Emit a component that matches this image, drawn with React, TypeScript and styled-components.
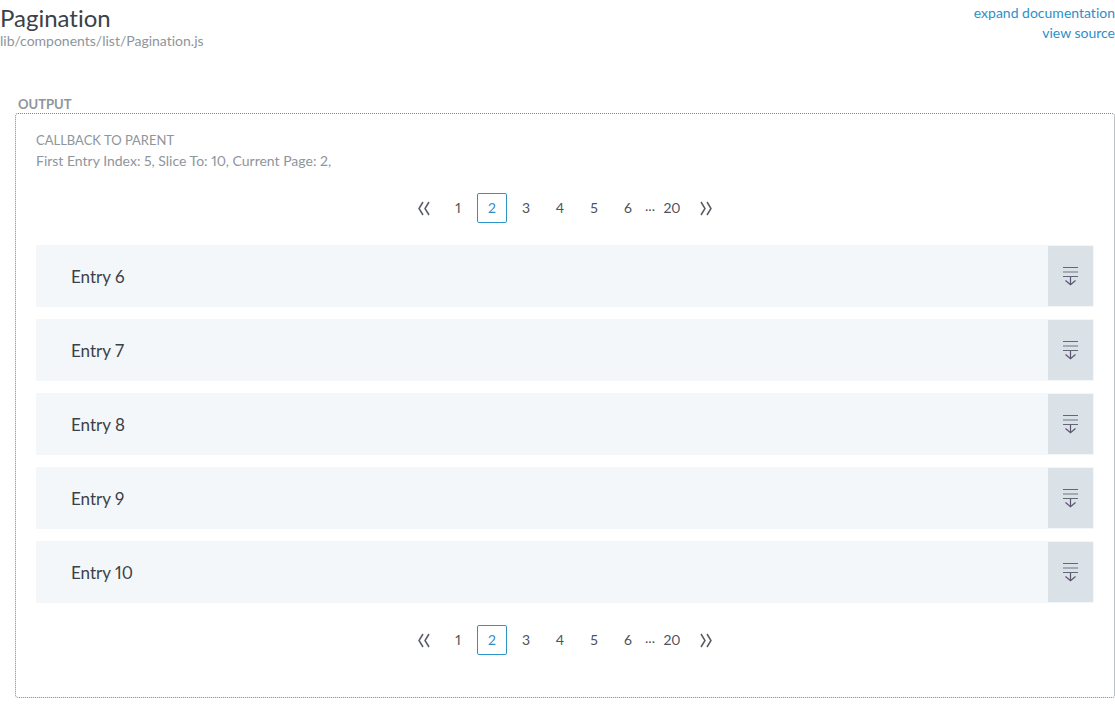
import React, { useState } from "react";
import styled, { createGlobalStyle } from "styled-components";

const GlobalStyle = createGlobalStyle`
  *, *::before, *::after { box-sizing: border-box; }
  body {
    margin: 0;
    background: #fff;
    color: #434a54;
    font-family: Lato, "Liberation Sans", sans-serif;
    font-size: 14px;
    line-height: 20px;
    font-variant-ligatures: none;
    font-variant-numeric: proportional-nums;
  }
  h1, h2, p, ul { margin: 0; padding: 0; }
  ul { list-style: none; }
`;

const Header = styled.header`
  display: flex;
  justify-content: space-between;
  align-items: flex-start;
`;

const Title = styled.h1`
  padding-top: 4px;
  font-size: 24px;
  line-height: 27px;
  font-weight: 400;
  color: #3b4148;
`;

const FilePath = styled.p`
  line-height: 20px;
  color: #8e959c;
`;

const Links = styled.nav`
  display: flex;
  flex-direction: column;
  align-items: flex-end;
  padding-top: 3px;
`;

const DocLink = styled.a`
  color: #2d8fc9;
  text-decoration: none;
  &:hover { text-decoration: underline; }
`;

const Output = styled.section`
  padding: 45px 0 30px 15px;
`;

const OutputLabel = styled.h2`
  padding-left: 3px;
  font-size: 13px;
  line-height: 17px;
  font-weight: 700;
  color: #8e959c;
`;

const Frame = styled.div`
  padding: 15px 20px 42px;
  border: 1px dotted #7d858d;
  border-radius: 3px;
`;

const Callback = styled.div`
  padding-bottom: 22px;
  color: #8e959c;
`;

const CallbackTitle = styled.p`
  font-size: 13px;
  line-height: 22px;
`;

const Pager = styled.nav`
  display: flex;
  justify-content: center;
  align-items: center;
  gap: 4px;
`;

const PageButton = styled.button<{ $current?: boolean }>`
  display: flex;
  align-items: center;
  justify-content: center;
  width: 30px;
  height: 30px;
  padding: 0;
  border: 1px solid ${(p) => (p.$current ? "#2d93cb" : "transparent")};
  border-radius: 2px;
  background: none;
  color: ${(p) => (p.$current ? "#2d8fc9" : "#4d535a")};
  font: inherit;
  cursor: pointer;
`;

const Ellipsis = styled.span`
  width: 14px;
  margin: 0 -4px;
  padding-bottom: 4px;
  font-size: 14px;
  line-height: 16px;
  text-align: center;
  white-space: nowrap;
  color: #4d535a;
`;

const Entries = styled.ul`
  display: grid;
  gap: 12px;
  margin: 22px 0;
`;

const Entry = styled.li`
  display: flex;
  justify-content: space-between;
  height: 62px;
  border: 1px solid #f3f7fa;
  border-radius: 1px;
  background: #f3f7fa;
`;

const EntryName = styled.span`
  align-self: center;
  padding: 2px 0 0 34px;
  font-size: 17px;
  line-height: 24px;
  color: #3b4148;
`;

const ExpandButton = styled.button`
  display: flex;
  align-items: center;
  justify-content: center;
  width: 45px;
  padding: 0;
  border: 0;
  background: #dae1e7;
  cursor: pointer;
`;

const Chevrons = ({ back }: { back?: boolean }) => (
  <svg width="14" height="16" viewBox="0 0 14 16" fill="none" stroke="#555b62" strokeWidth="1.5" aria-hidden="true">
    {back ? <path d="M6 2 2 8.500l4 6.500M12 2 8 8.500l4 6.500" /> : <path d="m2 2 4 6.500-4 6.500M8 2 12 8.500l-4 6.500" />}
  </svg>
);

const ExpandIcon = () => (
  <svg width="15" height="20" viewBox="0 0 15 20" fill="none" aria-hidden="true">
    <path d="M0 1.500h15M0 10.500h15" stroke="#626976" />
    <path d="M0 6h15" stroke="#a4abb2" strokeWidth="2" />
    <path d="M7.500 11v8M2.500 14.500l5 4.300 5-4.300" stroke="#5d5570" strokeWidth="1.2" />
  </svg>
);

type PaginationProps = { page: number; onChange: (n: number) => void; label: string };

const Pagination = ({ page, onChange, label }: PaginationProps) => (
  <Pager aria-label={label}>
    <PageButton aria-label="Previous page" onClick={() => onChange(Math.max(1, page - 1))}>
      <Chevrons back />
    </PageButton>
    {[1, 2, 3, 4, 5, 6].map((n) => (
      <PageButton key={n} $current={n === page} aria-current={n === page ? "page" : undefined} onClick={() => onChange(n)}>
        {n}
      </PageButton>
    ))}
    <Ellipsis>...</Ellipsis>
    <PageButton $current={page === 20} onClick={() => onChange(20)}>20</PageButton>
    <PageButton aria-label="Next page" onClick={() => onChange(Math.min(20, page + 1))}>
      <Chevrons />
    </PageButton>
  </Pager>
);

export default function App() {
  const [page, setPage] = useState(2);
  const first = (page - 1) * 5;
  return (
    <>
      <GlobalStyle />
      <Header>
        <div>
          <Title>Pagination</Title>
          <FilePath>lib/components/list/Pagination.js</FilePath>
        </div>
        <Links>
          <DocLink href="#documentation">expand documentation</DocLink>
          <DocLink href="#source">view source</DocLink>
        </Links>
      </Header>
      <Output>
        <OutputLabel>OUTPUT</OutputLabel>
        <Frame>
          <Callback>
            <CallbackTitle>CALLBACK TO PARENT</CallbackTitle>
            <p>{`First Entry Index: ${first}, Slice To: ${first + 5}, Current Page: ${page},`}</p>
          </Callback>
          <Pagination page={page} onChange={setPage} label="Top pagination" />
          <Entries>
            {[1, 2, 3, 4, 5].map((n) => (
              <Entry key={n}>
                <EntryName>Entry {first + n}</EntryName>
                <ExpandButton aria-label={`Expand entry ${first + n}`}>
                  <ExpandIcon />
                </ExpandButton>
              </Entry>
            ))}
          </Entries>
          <Pagination page={page} onChange={setPage} label="Bottom pagination" />
        </Frame>
      </Output>
    </>
  );
}
